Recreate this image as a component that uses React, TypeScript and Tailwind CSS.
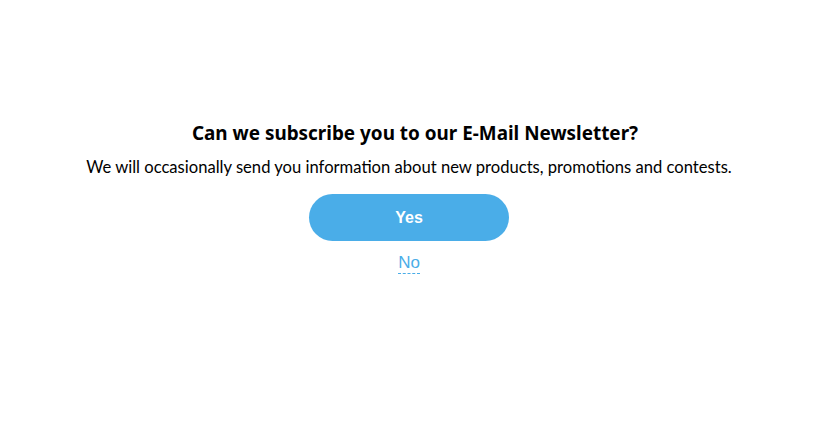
import React from "react";

export default function App() {
  return (
    <div className="w-[822px] h-[424px] bg-white flex flex-col items-center pt-[120px] pr-[4px] font-['Lato',sans-serif]">
      <h1 className="text-[18.9px] leading-[27px] font-bold text-black font-['Noto_Sans',sans-serif] translate-x-[6px]">Can we subscribe you to our E-Mail Newsletter?</h1>
      <p className="mt-[10px] text-[16.6px] leading-[20px] text-black">We will occasionally send you information about new products, promotions and contests.</p>
      <button className="mt-[17px] w-[200px] h-[47px] rounded-full bg-[#4aade8] text-white text-[16px] font-bold font-['Liberation_Sans',Arial,sans-serif]">Yes</button>
      <a className="mt-[11px] text-[17px] leading-[21px] text-[#4aade8] border-b border-dashed border-[#4aade8] font-['Liberation_Sans',Arial,sans-serif]">No</a>
    </div>
  );
}
